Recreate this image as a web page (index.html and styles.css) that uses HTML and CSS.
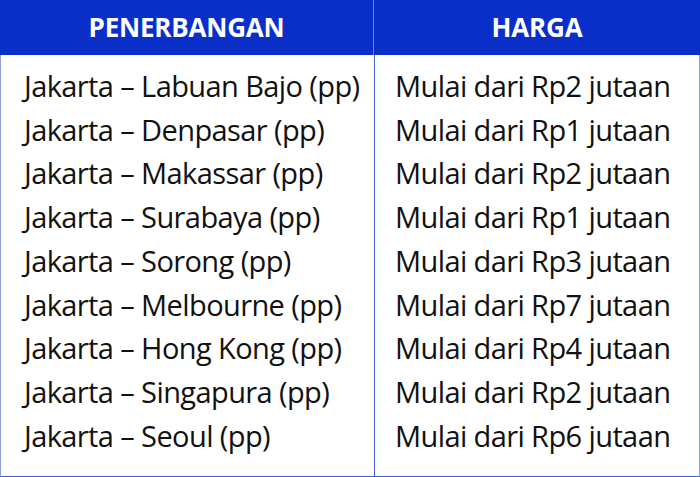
FILE: index.html
```html
<!DOCTYPE html>
<html lang="id">
<head>
<meta charset="utf-8">
<link rel="stylesheet" href="styles.css">
</head>
<body>
<div class="table">
  <div class="head">
    <div class="hcell hleft">PENERBANGAN</div>
    <div class="hcell">HARGA</div>
  </div>
  <div class="body">
    <div class="col left">
      <div class="row">Jakarta – Labuan Bajo (pp)</div>
      <div class="row">Jakarta – Denpasar (pp)</div>
      <div class="row">Jakarta – Makassar (pp)</div>
      <div class="row">Jakarta – Surabaya (pp)</div>
      <div class="row">Jakarta – Sorong (pp)</div>
      <div class="row">Jakarta – Melbourne (pp)</div>
      <div class="row">Jakarta – Hong Kong (pp)</div>
      <div class="row">Jakarta – Singapura (pp)</div>
      <div class="row">Jakarta – Seoul (pp)</div>
    </div>
    <div class="col right">
      <div class="row">Mulai dari Rp2 jutaan</div>
      <div class="row">Mulai dari Rp1 jutaan</div>
      <div class="row">Mulai dari Rp2 jutaan</div>
      <div class="row">Mulai dari Rp1 jutaan</div>
      <div class="row">Mulai dari Rp3 jutaan</div>
      <div class="row">Mulai dari Rp7 jutaan</div>
      <div class="row">Mulai dari Rp4 jutaan</div>
      <div class="row">Mulai dari Rp2 jutaan</div>
      <div class="row">Mulai dari Rp6 jutaan</div>
    </div>
  </div>
</div>
</body>
</html>
```

FILE: styles.css
```css
html, body {
  margin: 0;
  padding: 0;
  background: #ffffff;
}
.table {
  width: 700px;
  height: 477px;
  display: flex;
  flex-direction: column;
  font-family: "Open Sans", "Liberation Sans", sans-serif;
}
.head {
  display: grid;
  grid-template-columns: 374px 1fr;
  height: 55px;
  background: #0a2fc9;
}
.hcell {
  color: #ffffff;
  font-weight: 700;
  font-size: 26px;
  letter-spacing: -0.2px;
  display: flex;
  align-items: center;
  justify-content: center;
  padding-bottom: 1px;
}
.hleft {
  border-right: 1px solid #6f86e0;
}
.body {
  flex: 1;
  display: grid;
  grid-template-columns: 374px 1fr;
  border-left: 1px solid #8ea0dc;
  border-right: 1px solid #8ea0dc;
  border-bottom: 1px solid #3f5fd4;
}
.col {
  padding-top: 9px;
  font-size: 29px;
  letter-spacing: -0.6px;
  color: #111111;
}
.left {
  border-right: 1px solid #3f5fd4;
  padding-left: 23px;
}
.right {
  padding-left: 20px;
}
.row {
  line-height: 43.7px;
  white-space: nowrap;
}
```
